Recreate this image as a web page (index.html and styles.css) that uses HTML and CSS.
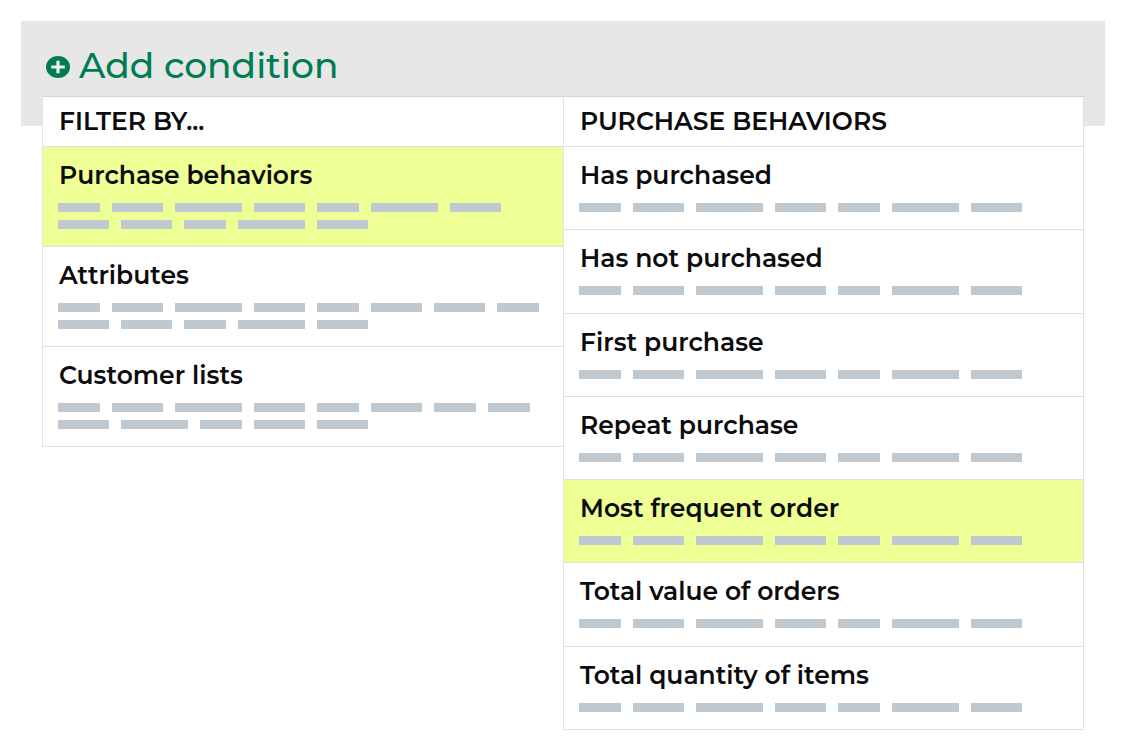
FILE: index.html
```html
<!DOCTYPE html>
<html lang="en">
<head>
<meta charset="utf-8">
<meta name="viewport" content="width=device-width, initial-scale=1">
<title>Add condition</title>
<link rel="stylesheet" href="styles.css">
</head>
<body>
<main>
  <header class="banner">
    <button class="add" type="button">
      <svg class="add-icon" viewBox="0 0 24 22" aria-hidden="true">
        <ellipse cx="12" cy="11" rx="12" ry="11" fill="#007c53"/>
        <path d="M12 4.8v12.4M5.2 11h13.6" stroke="#eee" stroke-width="3.2" fill="none"/>
      </svg>
      <span>Add condition</span>
    </button>
  </header>
  <div class="menu">
    <section class="column">
      <h2 class="heading">FILTER BY...</h2>
      <button class="option selected" type="button">
        <span class="title">Purchase behaviors</span>
        <span class="bars"><i class="s"></i><i class="m"></i><i class="l"></i><i class="m"></i><i class="s"></i><i class="l"></i><i class="m"></i><i class="m"></i><i class="m"></i><i class="s"></i><i class="l"></i><i class="m"></i></span>
      </button>
      <button class="option" type="button">
        <span class="title">Attributes</span>
        <span class="bars"><i class="s"></i><i class="m"></i><i class="l"></i><i class="m"></i><i class="s"></i><i class="m"></i><i class="m"></i><i class="s"></i><i class="m"></i><i class="m"></i><i class="s"></i><i class="l"></i><i class="m"></i></span>
      </button>
      <button class="option" type="button">
        <span class="title">Customer lists</span>
        <span class="bars"><i class="s"></i><i class="m"></i><i class="l"></i><i class="m"></i><i class="s"></i><i class="m"></i><i class="s"></i><i class="s"></i><i class="m"></i><i class="l"></i><i class="s"></i><i class="m"></i><i class="m"></i></span>
      </button>
    </section>
    <section class="column behaviors">
      <h2 class="heading">PURCHASE BEHAVIORS</h2>
      <button class="option" type="button">
        <span class="title">Has purchased</span>
        <span class="bars"><i class="s"></i><i class="m"></i><i class="l"></i><i class="m"></i><i class="s"></i><i class="l"></i><i class="m"></i></span>
      </button>
      <button class="option" type="button">
        <span class="title">Has not purchased</span>
        <span class="bars"><i class="s"></i><i class="m"></i><i class="l"></i><i class="m"></i><i class="s"></i><i class="l"></i><i class="m"></i></span>
      </button>
      <button class="option" type="button">
        <span class="title">First purchase</span>
        <span class="bars"><i class="s"></i><i class="m"></i><i class="l"></i><i class="m"></i><i class="s"></i><i class="l"></i><i class="m"></i></span>
      </button>
      <button class="option" type="button">
        <span class="title">Repeat purchase</span>
        <span class="bars"><i class="s"></i><i class="m"></i><i class="l"></i><i class="m"></i><i class="s"></i><i class="l"></i><i class="m"></i></span>
      </button>
      <button class="option selected" type="button">
        <span class="title">Most frequent order</span>
        <span class="bars"><i class="s"></i><i class="m"></i><i class="l"></i><i class="m"></i><i class="s"></i><i class="l"></i><i class="m"></i></span>
      </button>
      <button class="option" type="button">
        <span class="title">Total value of orders</span>
        <span class="bars"><i class="s"></i><i class="m"></i><i class="l"></i><i class="m"></i><i class="s"></i><i class="l"></i><i class="m"></i></span>
      </button>
      <button class="option" type="button">
        <span class="title">Total quantity of items</span>
        <span class="bars"><i class="s"></i><i class="m"></i><i class="l"></i><i class="m"></i><i class="s"></i><i class="l"></i><i class="m"></i></span>
      </button>
    </section>
  </div>
</main>
</body>
</html>
```
FILE: styles.css
```css
* { box-sizing: border-box; }

body {
  margin: 0;
  padding: 21px 21px 20px;
  background: #fff;
  color: #0c0c0e;
  font-family: Montserrat, Inter, sans-serif;
}

button {
  border: 0;
  padding: 0;
  background: none;
  color: inherit;
  font: inherit;
  text-align: left;
  cursor: pointer;
}

.banner {
  padding: 24px 25px 41px;
  background: #e7e7e7;
}

.add {
  display: flex;
  align-items: center;
  gap: 9px;
  color: #007c53;
  font-size: 36px;
  font-weight: 500;
  line-height: 40px;
}

.add-icon {
  width: 24px;
  height: 22px;
  margin-top: 4px;
}

.menu {
  display: grid;
  grid-template-columns: 1fr 1fr;
  align-items: start;
  margin: -30px 21px 0;
}

.column {
  display: flex;
  flex-direction: column;
  border-top: 1px solid #ccd5db;
  border-left: 1px solid #e3e5e8;
  background: #fff;
}

.behaviors {
  min-height: 634px;
  border-right: 1px solid #dfe1e3;
}

.heading {
  margin: 0;
  padding: 8px 16px 9px;
  border-bottom: 1px solid #dfe1e3;
  font-size: 25px;
  font-weight: 600;
  line-height: 32px;
}

.option {
  flex: 1 0 auto;
  display: flex;
  flex-direction: column;
  gap: 12px;
  padding: 12px 15px 17px;
  border-bottom: 1px solid #dfe1e3;
  font-size: 25px;
  font-weight: 600;
  line-height: 32px;
}

.title { padding-left: 1px; }

.selected { background: #edff95; }

.bars {
  display: flex;
  flex-wrap: wrap;
  gap: 8px 12px;
}

.bars i {
  height: 9px;
  background: #c1c9d0;
}

.s { width: 42px; }
.m { width: 51px; }
.l { width: 67px; }
```
